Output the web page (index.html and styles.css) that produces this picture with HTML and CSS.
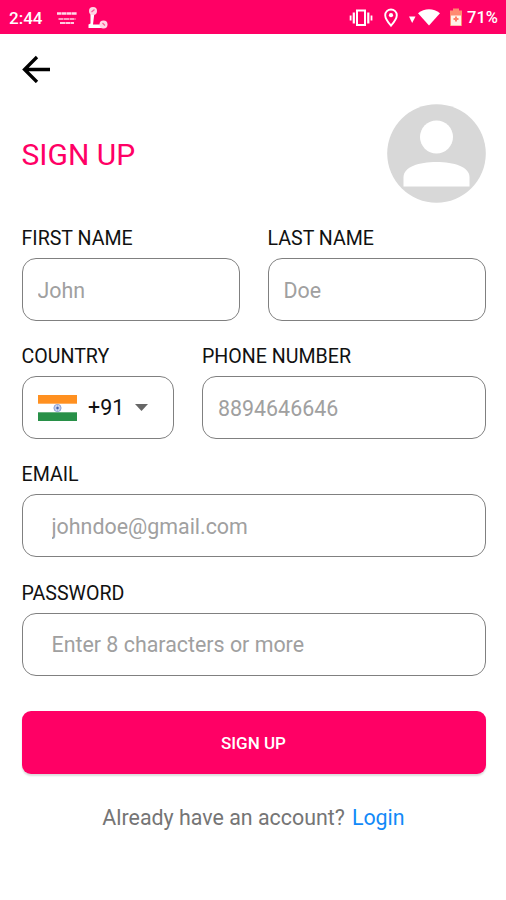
FILE: index.html
```html
<!DOCTYPE html>
<html lang="en">
<head>
    <meta charset="UTF-8">
    <meta name="viewport" content="width=device-width, initial-scale=1.0">
    <title>Sign Up</title>
    <link rel="stylesheet" href="styles.css">
</head>
<body>
    <div class="statusbar">
        <span class="time">2:44</span>
        <svg class="icon-app" width="22" height="18" viewBox="0 0 22 18" fill="none" stroke="#fff">
            <path d="M0 4.500h20" stroke-width="2.600" stroke-dasharray="4.500 .4" opacity=".85"/>
            <path d="M1.500 10h17" stroke-width="1.600" stroke-dasharray="5 .5" opacity=".8"/>
            <path d="M3 14h14" stroke-width="2" stroke-dasharray="5 .4" opacity=".8"/>
        </svg>
        <svg class="icon-scooter" width="22" height="24" viewBox="0 0 22 24">
            <path d="M3.500 6h4L6 18.500h9V22H1.500v-3.500l2-1z" fill="#fff"/>
            <circle cx="6" cy="5" r="4" fill="#ffd6e5"/>
            <circle cx="16.500" cy="18.500" r="4" fill="#ffd6e5"/>
            <path d="M4.500 6L7.500 3.500M15.500 17l2.500 2.500" stroke="#ff5a98" stroke-width="1.200"/>
        </svg>
        <div class="status-right">
            <svg class="icon-vibrate" width="24" height="20" viewBox="0 0 24 20" fill="none" stroke="#fff" stroke-width="2">
                <rect x="8" y="2.500" width="8" height="14.500"/>
                <path d="M4.800 4.500v11M19.300 4.500v11" stroke-width="2.200"/>
                <path d="M1.600 7.500v5M22.500 7.500v5" stroke-width="1.800"/>
            </svg>
            <svg class="icon-pin" width="14" height="20" viewBox="0 0 14 20">
                <path d="M7 1.500C3.800 1.500 1.200 4 1.200 7.200 1.200 11 7 17.700 7 17.700s5.800-6.700 5.800-10.500C12.800 4 10.200 1.500 7 1.500z" fill="none" stroke="#fff" stroke-width="1.900"/>
                <circle cx="7" cy="7.200" r="2.100" fill="#fff"/>
            </svg>
            <svg class="icon-wifi" width="32" height="20" viewBox="0 0 32 20" fill="#fff">
                <path d="M1 8.500h6.500L4.200 15z"/>
                <path d="M10 5.200C16.500 0 25.500 0 32 5.200L21 17.500z"/>
            </svg>
            <svg class="icon-battery" width="14" height="20" viewBox="0 0 14 20">
                <path d="M4 .5h6v2h3V18H1V2.500h3z" fill="#ff8a70"/>
                <path d="M2 7.500h10V17.500H2z" fill="#fff3e8"/>
                <path d="M7 8.500v5M4.500 11h5" stroke="#ff8068" stroke-width="2"/>
            </svg>
            <span class="percent">71%</span>
        </div>
    </div>

    <div class="container">
        <a href="#" class="back" aria-label="Back">
            <svg width="28" height="28" viewBox="0 0 28 28" fill="none" stroke="#000" stroke-width="3.300">
                <path d="M28 14.500H3M15 2L2.500 14.500 15 27"/>
            </svg>
        </a>

        <div class="header">
            <h1>SIGN UP</h1>
            <svg class="avatar" width="99" height="99" viewBox="0 0 99 99">
                <circle cx="49.500" cy="49.500" r="49.300" fill="#d8d8d8"/>
                <circle cx="49.500" cy="33" r="16.500" fill="#fff"/>
                <path d="M16.500 82.500V73C16.500 63 32 58 49.500 58s33 5 33 15v9.500z" fill="#fff"/>
            </svg>
        </div>

        <form class="form">
            <div class="row names">
                <div class="field">
                    <label for="firstname">FIRST NAME</label>
                    <input id="firstname" type="text" placeholder="John">
                </div>
                <div class="field">
                    <label for="lastname">LAST NAME</label>
                    <input id="lastname" type="text" placeholder="Doe">
                </div>
            </div>
            <div class="row contact">
                <div class="field">
                    <label for="country">COUNTRY</label>
                    <button id="country" class="country" type="button">
                        <svg class="flag" width="39" height="26" viewBox="0 0 39 26">
                            <rect width="39" height="26" fill="#fff"/>
                            <rect width="39" height="8.700" fill="#ff9020"/>
                            <rect y="17.300" width="39" height="8.700" fill="#289048"/>
                            <circle cx="19.500" cy="13" r="3.600" fill="#dfe5f5" stroke="#8196cf" stroke-width=".9"/>
                            <path d="M19.500 9.500v7M16 13h7M17 10.500l5 5M22 10.500l-5 5" stroke="#8196cf" stroke-width=".5"/>
                            <circle cx="19.500" cy="13" r="1.200" fill="#4660ac"/>
                        </svg>
                        <span class="code">+91</span>
                        <svg class="caret" width="13" height="7" viewBox="0 0 13 7">
                            <path d="M0 0h13L6.500 7z" fill="#666"/>
                        </svg>
                    </button>
                </div>
                <div class="field">
                    <label for="phone">PHONE NUMBER</label>
                    <input id="phone" type="tel" placeholder="8894646646">
                </div>
            </div>
            <div class="field wide">
                <label for="email">EMAIL</label>
                <input id="email" type="email" placeholder="johndoe@gmail.com">
            </div>
            <div class="field wide">
                <label for="password">PASSWORD</label>
                <input id="password" type="password" placeholder="Enter 8 characters or more">
            </div>
            <button class="btnsignup" type="submit">SIGN UP</button>
        </form>

        <p class="login"><span>Already have an account?</span><a href="#">Login</a></p>
    </div>
</body>
</html>
```

FILE: styles.css
```css
* {
    box-sizing: border-box;
}

body {
    margin: 0;
    background-color: #fff;
    font-family: Roboto, sans-serif;
    color: #111;
}

svg {
    display: block;
    flex-shrink: 0;
}

.statusbar {
    display: flex;
    align-items: center;
    height: 34px;
    padding: 1px 8px 0 9px;
    background-color: #ff0065;
    color: #fff;
    font-size: 17px;
    font-weight: 500;
}

.time {
    width: 48px;
}

.icon-scooter {
    margin-left: 8px;
}

.status-right {
    display: flex;
    align-items: center;
    margin-left: auto;
}

.icon-pin {
    margin-left: 11px;
}

.icon-wifi {
    margin-left: 10px;
}

.icon-battery {
    margin-left: 9px;
}

.percent {
    margin-left: 4px;
    font-size: 16.5px;
}

.container {
    padding: 21px 20.5px 0 21.5px;
}

.back {
    display: block;
    width: 28px;
    height: 28px;
}

.header {
    display: flex;
    justify-content: space-between;
    align-items: center;
    margin-top: 21px;
}

h1 {
    margin: 3px 0 0;
    font-size: 30px;
    font-weight: 400;
    line-height: 36px;
    color: #ff0065;
}

.form {
    display: flex;
    flex-direction: column;
    gap: 23.2px;
    margin-top: 23px;
}

.row {
    display: grid;
    gap: 28px;
}

.names {
    grid-template-columns: 1fr 1fr;
}

.contact {
    grid-template-columns: 152.5px 1fr;
}

.field {
    display: flex;
    flex-direction: column;
    gap: 7px;
    min-width: 0;
}

label {
    font-size: 19.6px;
    line-height: 25px;
}

input,
.country {
    width: 100%;
    height: 63px;
    padding: 1px 15px 0;
    border: 1.4px solid #808080;
    border-radius: 14px;
    background-color: #fff;
    font-family: inherit;
    font-size: 21.4px;
    color: #111;
}

input::placeholder {
    color: #a0a0a0;
    opacity: 1;
}

.wide input {
    padding: 1px 29px 0;
}

.country {
    display: flex;
    align-items: center;
    padding-top: 0;
}

.code {
    margin-left: 11.5px;
}

.caret {
    margin-left: 11px;
}

.btnsignup {
    height: 63px;
    margin-top: 12.5px;
    border: none;
    border-radius: 9px;
    background-color: #ff0065;
    box-shadow: 0 2px 2px rgba(0, 0, 0, 0.14);
    color: #fff;
    font-family: inherit;
    font-size: 17px;
    font-weight: 500;
}

.login {
    display: flex;
    justify-content: center;
    gap: 7px;
    margin: 30px 0 0;
    font-size: 21.4px;
    line-height: 28px;
    color: #757575;
}

.login a {
    color: #1289f8;
    text-decoration: none;
}
```
